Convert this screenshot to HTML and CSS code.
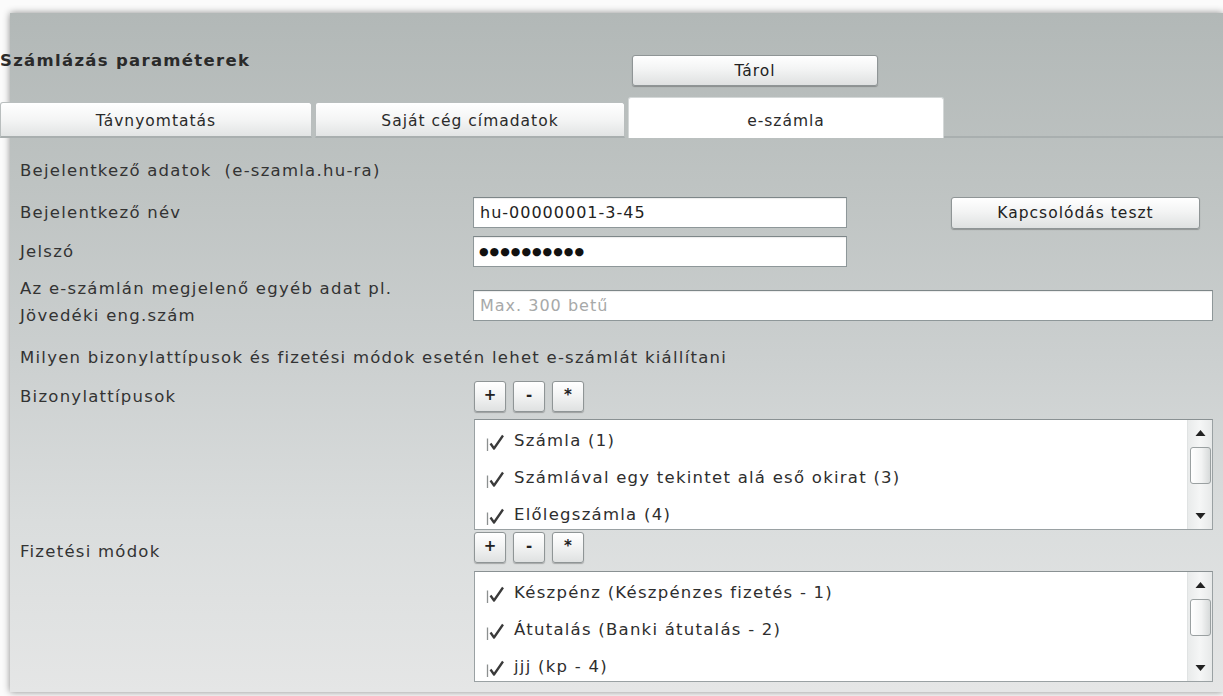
FILE: index.html
```html
<!DOCTYPE html>
<html lang="hu">
<head>
<meta charset="utf-8">
<title>Számlázás paraméterek</title>
<link rel="stylesheet" href="styles.css">
</head>
<body>
<div class="panel">
  <div class="header">
    <h1 class="title">Számlázás paraméterek</h1>
    <button class="btn btn-save">Tárol</button>
  </div>

  <div class="tabs">
    <div class="tab">Távnyomtatás</div>
    <div class="tab">Saját cég címadatok</div>
    <div class="tab active">e-számla</div>
    <div class="tab-rest"></div>
  </div>

  <div class="content">
    <div class="row row-section">
      <span class="label">Bejelentkező adatok&nbsp; (e-szamla.hu-ra)</span>
    </div>

    <div class="row row-field first">
      <span class="label">Bejelentkező név</span>
      <input class="input input-short" type="text" value="hu-00000001-3-45">
      <button class="btn btn-test">Kapcsolódás teszt</button>
    </div>

    <div class="row row-field">
      <span class="label">Jelszó</span>
      <div class="input input-short dots">●●●●●●●●●●</div>
    </div>

    <div class="row row-extra">
      <span class="label">Az e-számlán megjelenő egyéb adat pl.<br>Jövedéki eng.szám</span>
      <input class="input input-wide" type="text" placeholder="Max. 300 betű">
    </div>

    <div class="row row-section note">
      <span class="label wide">Milyen bizonylattípusok és fizetési módok esetén lehet e-számlát kiállítani</span>
    </div>

    <div class="row row-tools">
      <span class="label">Bizonylattípusok</span>
      <div class="tools">
        <button class="btn tool">+</button>
        <button class="btn tool">-</button>
        <button class="btn tool">*</button>
      </div>
    </div>

    <div class="row row-list">
      <span class="label"></span>
      <div class="listbox">
        <ul class="items">
          <li><svg class="check" viewBox="0 0 20 20"><path d="M1.5 7.5v12.5" stroke="#8c9090" stroke-width="1.3" fill="none"/><path d="M4.5 12.5l3.5 5L17 4.5" stroke="#3a3a3a" stroke-width="2.3" fill="none" stroke-linejoin="round"/></svg>Számla (1)</li>
          <li><svg class="check" viewBox="0 0 20 20"><path d="M1.5 7.5v12.5" stroke="#8c9090" stroke-width="1.3" fill="none"/><path d="M4.5 12.5l3.5 5L17 4.5" stroke="#3a3a3a" stroke-width="2.3" fill="none" stroke-linejoin="round"/></svg>Számlával egy tekintet alá eső okirat (3)</li>
          <li><svg class="check" viewBox="0 0 20 20"><path d="M1.5 7.5v12.5" stroke="#8c9090" stroke-width="1.3" fill="none"/><path d="M4.5 12.5l3.5 5L17 4.5" stroke="#3a3a3a" stroke-width="2.3" fill="none" stroke-linejoin="round"/></svg>Előlegszámla (4)</li>
        </ul>
        <div class="scrollbar">
          <svg class="arrow" viewBox="0 0 10 6"><path d="M0 6L5 0l5 6z" fill="#222"/></svg>
          <div class="thumb"></div>
          <svg class="arrow down" viewBox="0 0 10 6"><path d="M0 0h10L5 6z" fill="#222"/></svg>
        </div>
      </div>
    </div>

    <div class="row row-tools second">
      <span class="label lower">Fizetési módok</span>
      <div class="tools">
        <button class="btn tool">+</button>
        <button class="btn tool">-</button>
        <button class="btn tool">*</button>
      </div>
    </div>

    <div class="row row-list last">
      <span class="label"></span>
      <div class="listbox">
        <ul class="items">
          <li><svg class="check" viewBox="0 0 20 20"><path d="M1.5 7.5v12.5" stroke="#8c9090" stroke-width="1.3" fill="none"/><path d="M4.5 12.5l3.5 5L17 4.5" stroke="#3a3a3a" stroke-width="2.3" fill="none" stroke-linejoin="round"/></svg>Készpénz (Készpénzes fizetés - 1)</li>
          <li><svg class="check" viewBox="0 0 20 20"><path d="M1.5 7.5v12.5" stroke="#8c9090" stroke-width="1.3" fill="none"/><path d="M4.5 12.5l3.5 5L17 4.5" stroke="#3a3a3a" stroke-width="2.3" fill="none" stroke-linejoin="round"/></svg>Átutalás (Banki átutalás - 2)</li>
          <li><svg class="check" viewBox="0 0 20 20"><path d="M1.5 7.5v12.5" stroke="#8c9090" stroke-width="1.3" fill="none"/><path d="M4.5 12.5l3.5 5L17 4.5" stroke="#3a3a3a" stroke-width="2.3" fill="none" stroke-linejoin="round"/></svg>jjj (kp - 4)</li>
        </ul>
        <div class="scrollbar">
          <svg class="arrow" viewBox="0 0 10 6"><path d="M0 6L5 0l5 6z" fill="#222"/></svg>
          <div class="thumb"></div>
          <svg class="arrow down" viewBox="0 0 10 6"><path d="M0 0h10L5 6z" fill="#222"/></svg>
        </div>
      </div>
    </div>
  </div>
</div>
</body>
</html>
```

FILE: styles.css
```css
* { box-sizing: border-box; }

html, body {
  margin: 0;
  padding: 0;
  background: #fbfbfb;
  overflow: hidden;
}

body {
  width: 1223px;
  height: 696px;
  font-family: "DejaVu Sans", Verdana, sans-serif;
  font-size: 16.5px;
  letter-spacing: 1.25px;
  color: #333;
  padding-top: 13px;
}

.panel {
  margin-left: 10px;
  height: 679px;
  background: linear-gradient(#b2b8b7 0%, #bec3c2 25%, #cbcfcf 50%, #dadddd 75%, #e5e6e6 100%);
  box-shadow: 0 0 7px rgba(0, 0, 0, 0.45);
}

/* header: title and save button */
.header {
  display: flex;
  align-items: flex-start;
  height: 87px;
}

.title {
  margin: 37px 0 0 -10px;
  width: 632px;
  flex: none;
  font-size: 16.5px;
  letter-spacing: 1.3px;
  line-height: 22px;
  font-weight: bold;
  color: #2a2a2a;
}

.btn {
  font-family: "DejaVu Sans", Verdana, sans-serif;
  font-size: 15.5px;
  letter-spacing: 1px;
  color: #222;
  background: linear-gradient(#ffffff 0%, #f3f4f4 45%, #dfe1e1 100%);
  border: 1px solid #8f9596;
  border-radius: 3px;
  box-shadow: 0 1px 1px rgba(0, 0, 0, 0.25);
  padding: 0;
  cursor: pointer;
}

.btn-save {
  margin-top: 42px;
  width: 246px;
  height: 31px;
}

/* tab strip */
.tabs {
  display: flex;
  align-items: flex-end;
  height: 38px;
  margin-left: -10px;
  gap: 3px;
}

.tab {
  height: 36px;
  display: flex;
  align-items: center;
  justify-content: center;
  padding-top: 3px;
  font-size: 15.5px;
  letter-spacing: 1px;
  color: #2a2a2a;
  background: linear-gradient(#ffffff 0%, #f4f5f5 50%, #e2e4e4 100%);
  border: 1px solid #b9bebe;
  border-bottom: 2px solid #a9afaf;
  border-radius: 3px 3px 0 0;
}

.tab:nth-child(1) { width: 312px; }
.tab:nth-child(2) { width: 310px; }

.tab.active {
  width: 316px;
  height: 41px;
  background: #fff;
  border-color: #d4d8d8;
  border-bottom: none;
  padding-top: 5px;
}

.tab-rest {
  flex: 1;
  align-self: stretch;
  border-bottom: 2px solid #a9afaf;
  margin-left: -3px;
}

/* form rows */
.content {
  padding: 0 10px 0 10px;
}

.row {
  display: flex;
  align-items: center;
}

.label {
  width: 453px;
  flex: none;
  line-height: 27px;
}

.label.wide {
  width: auto;
  white-space: nowrap;
}

.row-section {
  height: 30px;
  margin-top: 17px;
}

.row-field {
  height: 31px;
  margin-top: 8px;
}

.row-field.first { margin-top: 12px; }

.input {
  height: 31px;
  border: 1px solid #8e9799;
  border-top-color: #7d8688;
  background: #fff;
  font-family: "DejaVu Sans", Verdana, sans-serif;
  font-size: 16px;
  letter-spacing: 1px;
  color: #222;
  padding: 0 6px;
  box-shadow: inset 0 1px 1px rgba(0, 0, 0, 0.08);
  outline: none;
}

.input-short { width: 374px; }

.input-wide { flex: 1; margin-top: 6px; }

.input::placeholder { color: #a7a9a9; }

.dots {
  display: flex;
  align-items: center;
  font-size: 11px;
  letter-spacing: 1px;
  color: #111;
  padding-left: 5px;
}

.btn-test {
  margin-left: 104px;
  width: 249px;
  height: 32px;
}

.row-extra {
  height: 54px;
  margin-top: 8px;
}

.row-section.note {
  height: 26px;
  margin-top: 15px;
}

.row-tools {
  height: 31px;
  margin-top: 11px;
}

.row-tools.second { margin-top: 2px; }

.label.lower { padding-top: 7px; }

.tools {
  display: flex;
  gap: 7px;
  margin-left: 1px;
}

.tool {
  width: 32px;
  height: 31px;
  font-size: 15px;
  font-weight: bold;
  letter-spacing: 0;
  line-height: 1;
  padding-bottom: 3px;
}

/* list boxes with checked entries */
.row-list {
  margin-top: 7px;
  align-items: stretch;
}

.row-list.last { margin-top: 8px; }

.listbox {
  flex: 1;
  display: flex;
  height: 111px;
  margin-left: 1px;
  background: #fff;
  border: 1px solid #9aa1a3;
  border-top-color: #8a9193;
}

.items {
  flex: 1;
  list-style: none;
  margin: 0;
  padding: 2px 0 0 11px;
}

.items li {
  height: 37px;
  display: flex;
  align-items: center;
  color: #2e2e2e;
}

.check {
  width: 20px;
  height: 20px;
  margin-right: 8px;
  flex: none;
}

.scrollbar {
  width: 25px;
  display: flex;
  flex-direction: column;
  align-items: center;
  background: linear-gradient(90deg, #e9ebeb, #f5f6f6 50%, #e7e9e9);
  border-left: 1px solid #e0e3e3;
  padding: 10px 0 10px;
}

.arrow {
  width: 11px;
  height: 6px;
  flex: none;
}

.arrow.down { margin-top: auto; }

.thumb {
  width: 21px;
  height: 37px;
  margin-top: 11px;
  flex: none;
  background: linear-gradient(90deg, #ffffff, #f2f3f3 55%, #d7dada);
  border: 1px solid #9aa0a1;
  border-radius: 3px;
}
```
